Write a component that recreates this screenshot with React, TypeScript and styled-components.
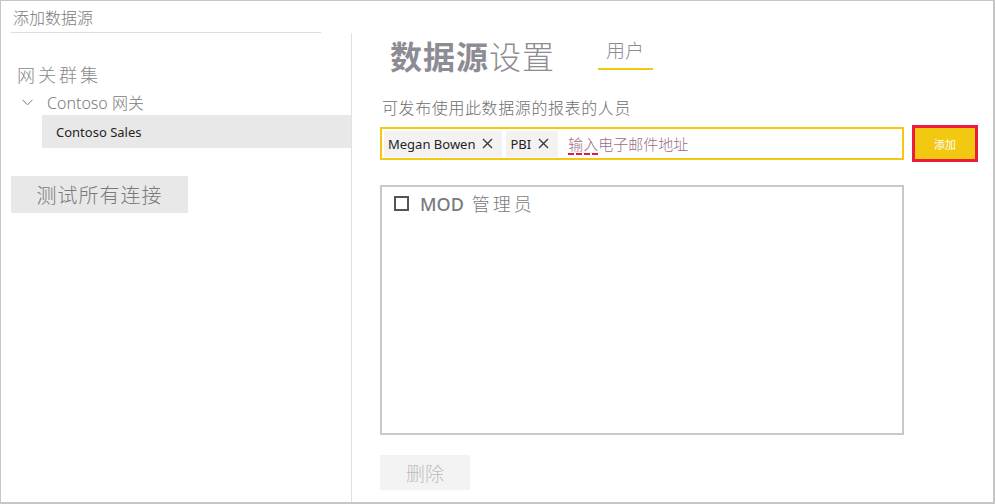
import React from "react";
import styled, { createGlobalStyle } from "styled-components";

const Global = createGlobalStyle`
  html, body { margin: 0; padding: 0; background: #fff; }
  body { font-family: "Segoe UI", "Noto Sans", "Noto Sans CJK SC", sans-serif; }
  * { box-sizing: border-box; }
`;

const Frame = styled.div`
  width: 995px;
  height: 504px;
  border: 1px solid #c6c6c6;
  border-right-width: 2px;
  border-bottom-width: 2px;
  display: grid;
  grid-template-columns: 351px 1fr;
  background: #fff;
  overflow: hidden;
`;

const LeftCol = styled.div`
  display: flex;
  flex-direction: column;
`;

const Title = styled.div`
  height: 32px;
  margin: 0 31px 0 10px;
  padding: 6px 0 0 2px;
  border-bottom: 1px solid #dedede;
  font-size: 16px;
  line-height: 20px;
  color: #7a7a7a;
  font-family: "Noto Sans CJK SC", sans-serif;
  font-weight: 300;
`;

const LeftBody = styled.div`
  flex: 1;
  border-right: 1px solid #e1e1e1;
  display: flex;
  flex-direction: column;
  padding-top: 29px;
`;

const GroupLabel = styled.div`
  padding-left: 16px;
  font-size: 18px;
  line-height: 24px;
  letter-spacing: 3px;
  color: #8a8a8a;
  font-family: "Noto Sans CJK SC", sans-serif;
  font-weight: 300;
`;

const TreeRow = styled.div`
  display: flex;
  align-items: center;
  margin-top: 4px;
  padding-left: 21px;
  height: 24px;
  font-size: 16px;
  color: #7a7a7a;
  font-family: "Segoe UI", "Noto Sans", "Noto Sans CJK SC", sans-serif;
  font-weight: 300;
  gap: 14px;
`;

const SelectedRow = styled.div`
  margin: 1px 0 0 41px;
  height: 33px;
  background: #e8e8e8;
  padding-left: 14px;
  display: flex;
  align-items: center;
  font-size: 13px;
  color: #252423;
  font-family: "Segoe UI", "Noto Sans", "Noto Sans CJK SC", sans-serif;
`;

const GreyButton = styled.div<{ $w: number; $h: number; $muted?: boolean }>`
  width: ${(p) => p.$w}px;
  height: ${(p) => p.$h}px;
  background: ${(p) => (p.$muted ? "#f3f3f3" : "#e8e8e8")};
  color: ${(p) => (p.$muted ? "#bdbdbd" : "#7a7a7a")};
  display: flex;
  align-items: center;
  justify-content: center;
  font-size: ${(p) => (p.$muted ? 19 : 20)}px;
  letter-spacing: ${(p) => (p.$muted ? 0 : 1)}px;
  font-family: "Noto Sans CJK SC", sans-serif;
  font-weight: 300;
`;

const TestButtonWrap = styled.div`
  margin: 28px 0 0 10px;
`;

const RightCol = styled.div`
  padding: 36px 0 0 28px;
  display: flex;
  flex-direction: column;
`;

const HeadRow = styled.div`
  display: flex;
  align-items: flex-start;
  margin-left: 10px;
  gap: 43px;
  height: 34px;
`;

const Heading = styled.div`
  font-size: 32px;
  line-height: 36px;
  letter-spacing: 1px;
  color: #8d8c94;
  font-family: "Noto Sans CJK SC", sans-serif;
`;

const Strong = styled.span`
  font-weight: 700;
`;

const Light = styled.span`
  font-weight: 300;
`;

const Tab = styled.div`
  padding: 1px 9px 6px 8px;
  border-bottom: 2px solid #f2c811;
  font-size: 19px;
  line-height: 24px;
  color: #8d8c94;
  font-family: "Noto Sans CJK SC", sans-serif;
  font-weight: 300;
`;

const Label = styled.div`
  margin-top: 26px;
  padding-left: 2px;
  font-size: 16px;
  line-height: 20px;
  letter-spacing: 0.6px;
  color: #6e6e6e;
  font-family: "Noto Sans CJK SC", sans-serif;
  font-weight: 300;
`;

const InputRow = styled.div`
  margin-top: 8px;
  display: flex;
  align-items: center;
  gap: 8px;
  height: 37px;
`;

const InputBox = styled.div`
  width: 524px;
  height: 33px;
  border: 2px solid #f2c811;
  display: flex;
  align-items: center;
  padding-left: 2px;
  gap: 4px;
`;

const Chip = styled.div`
  height: 26px;
  background: #f3f2f1;
  display: flex;
  align-items: center;
  padding: 0 9px 0 4px;
  gap: 7px;
  font-size: 13px;
  color: #252423;
  font-family: "Segoe UI", "Noto Sans", sans-serif;
`;

const Placeholder = styled.div`
  margin-left: 6px;
  font-size: 15px;
  color: #9a6d86;
  font-family: "Noto Sans CJK SC", sans-serif;
  font-weight: 300;
`;

const Misspelled = styled.span`
  text-decoration: underline dashed #e8193c;
  text-decoration-thickness: 2px;
  text-underline-offset: 3px;
`;

const AddButton = styled.div`
  width: 66px;
  height: 37px;
  background: #f2c811;
  border: 3px solid #ec1c3c;
  color: #fff;
  font-size: 11px;
  display: flex;
  align-items: center;
  justify-content: center;
  font-family: "Noto Sans CJK SC", sans-serif;
`;

const ListBox = styled.div`
  margin-top: 23px;
  width: 524px;
  height: 250px;
  border: 2px solid #c8c8c8;
  padding: 7px 0 0 12px;
`;

const ListItem = styled.div`
  display: flex;
  align-items: center;
  gap: 11px;
  font-size: 18px;
  line-height: 18px;
  color: #7a7a7a;
  font-family: "Noto Sans", "Noto Sans CJK SC", sans-serif;
`;

const Check = styled.div`
  width: 15px;
  height: 15px;
  border: 2px solid #555;
`;

const Mod = styled.span`
  font-weight: 500;
  margin-right: 8px;
`;

const Cjk = styled.span`
  font-family: "Noto Sans CJK SC", sans-serif;
  font-weight: 300;
  letter-spacing: 3px;
`;

const DeleteWrap = styled.div`
  margin-top: 20px;
`;

const XIcon = () => (
  <svg width="11" height="11" viewBox="0 0 11 11">
    <path d="M1 1 L10 10 M10 1 L1 10" stroke="#3b3a39" strokeWidth="1.4" fill="none" />
  </svg>
);

const Chevron = () => (
  <svg width="11" height="7" viewBox="0 0 11 7">
    <path d="M0.5 0.8 L5.5 5.8 L10.5 0.8" stroke="#7a7a7a" strokeWidth="1" fill="none" />
  </svg>
);

export default function App() {
  return (
    <>
      <Global />
      <Frame>
        <LeftCol>
          <Title>添加数据源</Title>
          <LeftBody>
            <GroupLabel>网关群集</GroupLabel>
            <TreeRow>
              <Chevron />
              <span>Contoso 网关</span>
            </TreeRow>
            <SelectedRow>Contoso Sales</SelectedRow>
            <TestButtonWrap>
              <GreyButton $w={177} $h={37}>测试所有连接</GreyButton>
            </TestButtonWrap>
          </LeftBody>
        </LeftCol>
        <RightCol>
          <HeadRow>
            <Heading>
              <Strong>数据源</Strong>
              <Light>设置</Light>
            </Heading>
            <Tab>用户</Tab>
          </HeadRow>
          <Label>可发布使用此数据源的报表的人员</Label>
          <InputRow>
            <InputBox>
              <Chip>
                Megan Bowen <XIcon />
              </Chip>
              <Chip>
                PBI <XIcon />
              </Chip>
              <Placeholder>
                <Misspelled>输入</Misspelled>电子邮件地址
              </Placeholder>
            </InputBox>
            <AddButton>添加</AddButton>
          </InputRow>
          <ListBox>
            <ListItem>
              <Check />
              <span>
                <Mod>MOD</Mod>
                <Cjk>管理员</Cjk>
              </span>
            </ListItem>
          </ListBox>
          <DeleteWrap>
            <GreyButton $w={90} $h={35} $muted>删除</GreyButton>
          </DeleteWrap>
        </RightCol>
      </Frame>
    </>
  );
}
